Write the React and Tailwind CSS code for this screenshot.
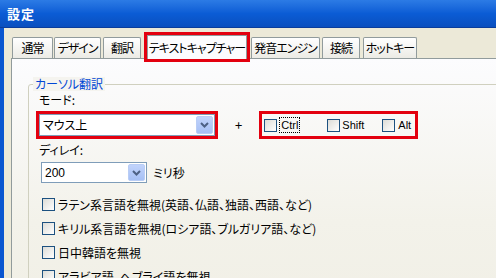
const tabs = [
  ['通常', 'w-[41px] ml-[1px]'],
  ['デザイン', 'w-[47px] ml-[1px]'],
  ['翻訳', 'w-[38px] ml-[2px]'],
  ['テキストキャプチャー', 'w-[100px] ml-[6px]'],
  ['発音エンジン', 'w-[69px] ml-[4px]'],
  ['接続', 'w-[38px] ml-[2px]'],
  ['ホットキー', 'w-[54px] ml-[3px]'],
]

const options = [
  'ラテン系言語を無視(英語、仏語、独語、西語、など)',
  'キリル系言語を無視(ロシア語、ブルガリア語、など)',
  '日中韓語を無視',
  'アラビア語、ヘブライ語を無視',
]

function Checkbox() {
  return (
    <span className="inline-block w-[13px] h-[13px] border border-[#1c5180] bg-gradient-to-br from-[#dcdcd7] to-[#ffffff] shrink-0" />
  )
}

function Arrow() {
  return (
    <span className="flex items-center justify-center w-[17px] h-full bg-gradient-to-b from-[#c1d3fb] to-[#a6c0f5] border border-[#b9cdf5] rounded-[2px]">
      <svg width="9" height="6" viewBox="0 0 9 6">
        <path d="M1 1 L4.5 4.5 L8 1" stroke="#4d6185" strokeWidth="2" fill="none" />
      </svg>
    </span>
  )
}

const latin = { fontFamily: '"Liberation Sans", sans-serif' }

export default function App() {
  return (
    <div className="w-[496px] h-[278px] overflow-hidden flex flex-col bg-[#ece9d8] text-[12px] text-black [font-feature-settings:'palt']" style={{ fontFamily: '"Noto Sans CJK JP", "Liberation Sans", sans-serif' }}>
      {/* title bar */}
      <div className="h-[28px] shrink-0 flex items-center pl-[7px] bg-gradient-to-b from-[#2c7be5] via-[#0b5cd5] to-[#0a4fbf] border-b border-[#0a3d9c]">
        <span className="text-white font-bold text-[13px] tracking-[1px]">設定</span>
      </div>

      <div className="flex flex-1 min-h-0">
        <div className="w-[4px] bg-[#0a56d0] shrink-0" />
        <div className="flex-1 flex flex-col pl-[7px] pt-[7px]">
          {/* tabs */}
          <div className="flex items-end h-[24px] whitespace-nowrap tracking-[-1px]">
            {tabs.map(([t, cls], i) =>
              i === 3 ? (
                <div key={t} className={`${cls} h-[24px] flex items-center justify-center bg-[#fcfcfe] border border-[#919b9c] border-b-0 outline-[3px] outline-[#e3000f] relative z-10 -mb-[1px]`}>
                  {t}
                </div>
              ) : (
                <div key={t} className={`${cls} h-[21px] flex items-center justify-center bg-gradient-to-b from-[#ffffff] to-[#ecebe5] border border-[#919b9c] border-b-0 rounded-t-[2px]`}>
                  {t}
                </div>
              )
            )}
          </div>

          {/* panel */}
          <div className="flex-1 border-t border-l border-[#919b9c] bg-gradient-to-b from-[#fcfcfe] via-[#f3f2ea] to-[#efede2] pl-[16px] pt-[25px]">
            <div className="relative border border-[#d0d0bf] rounded-[3px] h-[300px] -mr-[20px] pl-[10px] pt-[8px]">
              <span className="absolute -top-[8px] left-[4px] px-[2px] leading-[14px] bg-[#f5f4ef] text-[#0046d5]">カーソル翻訳</span>
              <div className="leading-[14px]">モード:</div>

              <div className="flex items-center mt-[4px]">
                <div className="w-[176px] h-[22px] bg-white border border-[#7f9db9] flex items-center justify-between pl-[3px] p-[1px] outline-[3px] outline-[#e3000f]">
                  <span>マウス上</span>
                  <Arrow />
                </div>
                <span className="ml-[20px] mr-[17px] text-[13px]">+</span>
                <div className="flex items-center h-[28px] border-[3px] border-[#e3000f] pl-[2px] pr-[4px] text-[11px]" style={latin}>
                  <Checkbox />
                  <span className="ml-[2px] border border-dotted border-black px-[1px] leading-[14px]">Ctrl</span>
                  <span className="ml-[27px] flex"><Checkbox /></span>
                  <span className="ml-[2px]">Shift</span>
                  <span className="ml-[18px] flex"><Checkbox /></span>
                  <span className="ml-[3px]">Alt</span>
                </div>
              </div>

              <div className="mt-[3px] leading-[16px]">ディレイ:</div>
              <div className="flex items-center mt-[4px]">
                <div className="w-[106px] h-[21px] ml-[2px] bg-white border border-[#7f9db9] flex items-center justify-between pl-[3px] p-[1px]">
                  <span style={latin}>200</span>
                  <Arrow />
                </div>
                <span className="ml-[6px]">ミリ秒</span>
              </div>

              <div className="flex flex-col gap-[7px] mt-[13px] ml-[3px]">
                {options.map(l => (
                  <div key={l} className="flex items-center gap-[3px] h-[17px]">
                    <Checkbox />
                    <span>{l}</span>
                  </div>
                ))}
              </div>
            </div>
          </div>
        </div>
      </div>
    </div>
  )
}
